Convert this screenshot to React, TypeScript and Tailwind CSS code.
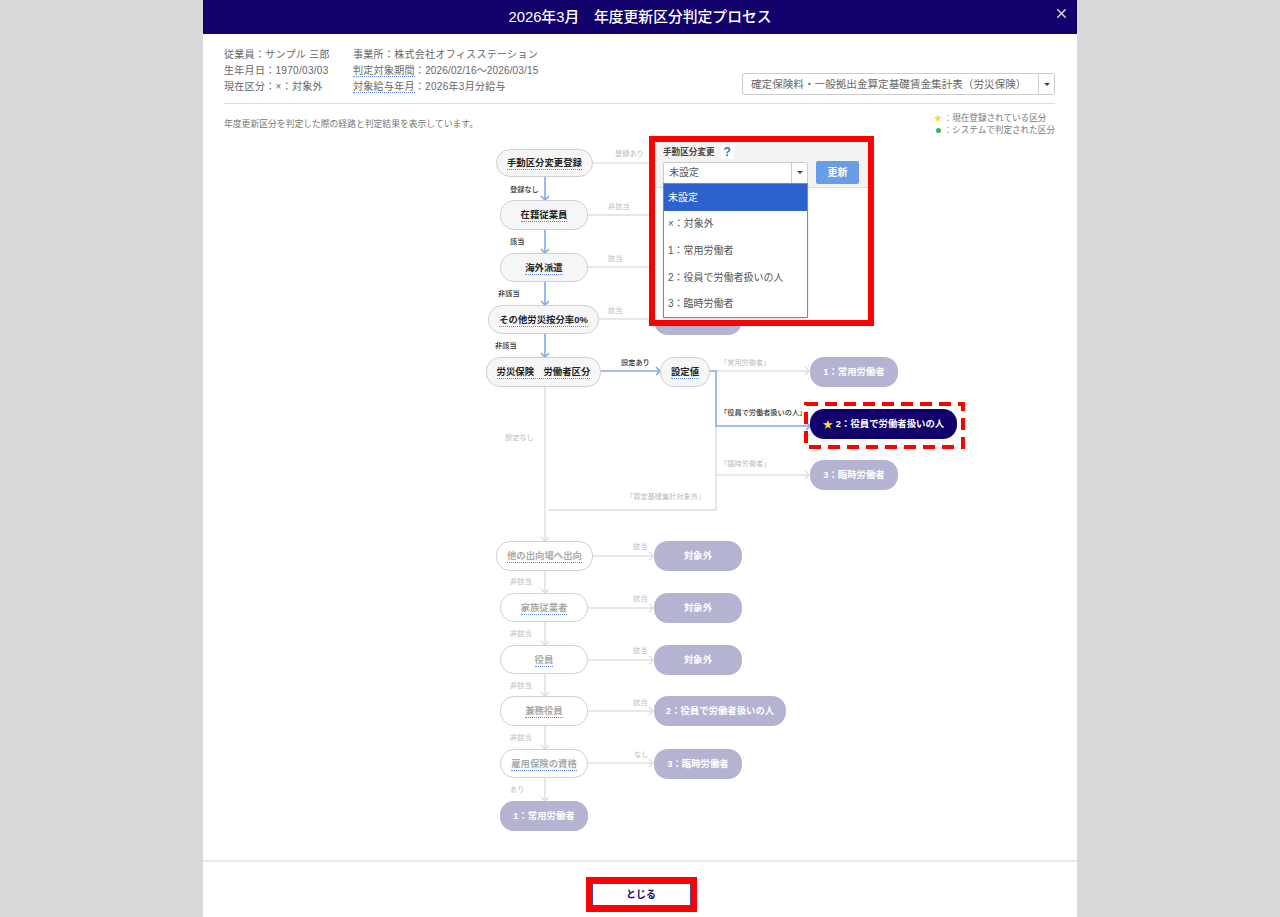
import { X } from "lucide-react";

const BLUE = "#7fa9ef";
const GREY = "#dfdfdf";

// page coordinates, the svg viewBox is shifted to match
const blueLines = [
  "M545 177V199",
  "M545 230V252",
  "M545 282V304",
  "M545 334V356",
  "M601 371H659",
  "M710 371H716V426H809",
];
const greyLines = [
  "M593 163H660",
  "M588 215H654",
  "M588 267H654",
  "M599 319H654",
  "M716 371H809",
  "M716 426V510H548",
  "M716 475H809",
  "M545 387V540",
  "M593 556H653",
  "M545 571V592",
  "M588 608H653",
  "M545 622V644",
  "M588 660H653",
  "M545 674V695",
  "M588 711H653",
  "M545 726V748",
  "M588 763H653",
  "M545 778V800",
];
const blueHeads = [
  "M541 196L545 200L549 196",
  "M541 249L545 253L549 249",
  "M541 301L545 305L549 301",
  "M541 353L545 357L549 353",
  "M656 367L660 371L656 375",
  "M806 422L810 426L806 430",
];
const greyHeads = [
  "M805 367L809 371L805 375",
  "M805 471L809 475L805 479",
  "M541 537L545 541L549 537",
  "M649 552L653 556L649 560",
  "M541 589L545 593L549 589",
  "M649 604L653 608L649 612",
  "M541 641L545 645L549 641",
  "M649 656L653 660L649 664",
  "M541 692L545 696L549 692",
  "M649 707L653 711L649 715",
  "M541 745L545 749L549 745",
  "M649 759L653 763L649 767",
  "M541 797L545 801L549 797",
];

const steps = [
  { label: "手動区分変更登録", pos: "left-[293px] top-[13px] w-[97px] h-[28px]", on: true },
  { label: "在籍従業員", pos: "left-[297px] top-[64px] w-[88px] h-[30px]", on: true },
  { label: "海外派遣", pos: "left-[297px] top-[117px] w-[88px] h-[29px]", on: true },
  { label: "その他労災按分率0%", pos: "left-[285px] top-[169px] w-[111px] h-[29px]", on: true },
  { label: "労災保険　労働者区分", pos: "left-[283px] top-[221px] w-[115px] h-[30px]", on: true },
  { label: "設定値", pos: "left-[457px] top-[221px] w-[50px] h-[30px]", on: true },
  { label: "他の出向場へ出向", pos: "left-[293px] top-[405px] w-[97px] h-[30px]", on: false },
  { label: "家族従業者", pos: "left-[297px] top-[457px] w-[88px] h-[29px]", on: false },
  { label: "役員", pos: "left-[297px] top-[509px] w-[88px] h-[29px]", on: false },
  { label: "兼務役員", pos: "left-[297px] top-[560px] w-[88px] h-[30px]", on: false },
  { label: "雇用保険の資格", pos: "left-[297px] top-[613px] w-[88px] h-[29px]", on: false },
];

const results = [
  { label: "対象外", pos: "left-[451px] top-[64px] w-[88px]" },
  { label: "対象外", pos: "left-[451px] top-[117px] w-[88px]" },
  { label: "対象外", pos: "left-[451px] top-[169px] w-[88px]" },
  { label: "1：常用労働者", pos: "left-[607px] top-[221px] w-[88px]" },
  { label: "3：臨時労働者", pos: "left-[607px] top-[324px] w-[88px]" },
  { label: "対象外", pos: "left-[451px] top-[405px] w-[88px]" },
  { label: "対象外", pos: "left-[451px] top-[457px] w-[88px]" },
  { label: "対象外", pos: "left-[451px] top-[509px] w-[88px]" },
  { label: "2：役員で労働者扱いの人", pos: "left-[451px] top-[560px] w-[132px]" },
  { label: "3：臨時労働者", pos: "left-[451px] top-[613px] w-[88px]" },
  { label: "1：常用労働者", pos: "left-[297px] top-[665px] w-[88px]" },
];

const edgeLabels = [
  { text: "登録あり", pos: "left-[412px] top-[13px]", on: false },
  { text: "登録なし", pos: "left-[307px] top-[49px]", on: true },
  { text: "非該当", pos: "left-[405px] top-[66px]", on: false },
  { text: "該当", pos: "left-[307px] top-[101px]", on: true },
  { text: "該当", pos: "left-[405px] top-[118px]", on: false },
  { text: "非該当", pos: "left-[295px] top-[153px]", on: true },
  { text: "該当", pos: "left-[405px] top-[170px]", on: false },
  { text: "非該当", pos: "left-[292px] top-[205px]", on: true },
  { text: "設定あり", pos: "left-[418px] top-[222px]", on: true },
  { text: "「常用労働者」", pos: "left-[517px] top-[222px]", on: false },
  { text: "「役員で労働者扱いの人」", pos: "left-[517px] top-[272px]", on: true },
  { text: "「臨時労働者」", pos: "left-[517px] top-[323px]", on: false },
  { text: "設定なし", pos: "left-[302px] top-[297px]", on: false },
  { text: "「算定基礎集計対象外」", pos: "left-[423px] top-[356px]", on: false },
  { text: "該当", pos: "left-[430px] top-[406px]", on: false },
  { text: "非該当", pos: "left-[307px] top-[441px]", on: false },
  { text: "該当", pos: "left-[430px] top-[458px]", on: false },
  { text: "非該当", pos: "left-[307px] top-[493px]", on: false },
  { text: "該当", pos: "left-[430px] top-[510px]", on: false },
  { text: "非該当", pos: "left-[307px] top-[545px]", on: false },
  { text: "該当", pos: "left-[430px] top-[562px]", on: false },
  { text: "非該当", pos: "left-[307px] top-[597px]", on: false },
  { text: "なし", pos: "left-[431px] top-[614px]", on: false },
  { text: "あり", pos: "left-[307px] top-[649px]", on: false },
];

const options = ["未設定", "×：対象外", "1：常用労働者", "2：役員で労働者扱いの人", "3：臨時労働者"];

function Caret() {
  return <span className="h-0 w-0 border-x-[3px] border-t-[3px] border-x-transparent border-t-[#444]" />;
}

export default function App() {
  return (
    <div className="flex min-h-[917px] justify-center bg-[#d9d9d9] [font-family:'Liberation_Sans','Noto_Sans_CJK_JP',sans-serif]">
      <div className="h-[917px] w-[874px] overflow-hidden bg-white">
        <div className="relative flex h-[34px] items-center justify-center bg-[#12006b] text-[14.8px] font-medium text-white">
          2026年3月　年度更新区分判定プロセス
          <X size={15} strokeWidth={2} className="absolute right-[8px] top-[6px] text-[#e8e8f4]" />
        </div>

        {/* employee info */}
        <div className="ml-[21px] mr-[22px] flex items-end justify-between border-b border-[#dddddd] pt-[13px] pb-[8px] text-[10px] leading-[16px] tracking-[0.3px] text-[#666666]">
          <div className="flex">
            <div className="w-[129px]">
              <div>従業員：サンプル 三郎</div>
              <div>生年月日：1970/03/03</div>
              <div>現在区分：×：対象外</div>
            </div>
            <div>
              <div>事業所：株式会社オフィスステーション</div>
              <div>
                <span className="border-b border-dotted border-[#5b8ae0]">判定対象期間</span>：
                <span className="tracking-[0.15px]">2026/02/16～2026/03/15</span>
              </div>
              <div>
                <span className="border-b border-dotted border-[#5b8ae0]">対象給与年月</span>：2026年3月分給与
              </div>
            </div>
          </div>
          <div className="flex h-[22px] w-[313px] items-center rounded-[2px] border border-[#cccccc] bg-white">
            <div className="flex-1 pl-[8px] text-[10.6px] leading-none tracking-normal">
              確定保険料・一般拠出金算定基礎賃金集計表（労災保険）
            </div>
            <div className="flex h-full w-[16px] items-center justify-center border-l border-[#cccccc]">
              <Caret />
            </div>
          </div>
        </div>

        <div className="ml-[21px] mr-[22px] flex h-[32px] justify-between text-[#777777]">
          <div className="pt-[15px] text-[8.8px] leading-[10px]">年度更新区分を判定した際の経路と判定結果を表示しています。</div>
          <div className="pt-[8px] text-[8.6px] leading-[12px]">
            <div className="flex items-center">
              <span className="w-[11px] text-center text-[9px] text-[#f6e03a]">★</span>：現在登録されている区分
            </div>
            <div className="flex items-center">
              <span className="flex w-[11px] justify-center">
                <span className="h-[5px] w-[5px] rounded-full bg-[#3fae62]" />
              </span>
              ：システムで判定された区分
            </div>
          </div>
        </div>

        {/* flow diagram */}
        <div className="relative h-[724px]">
          <svg className="absolute left-0 top-0" width="874" height="724" viewBox="203 136 874 724" fill="none">
            {greyLines.map((d) => (
              <path key={d} d={d} stroke={GREY} strokeWidth="1.5" />
            ))}
            {greyHeads.map((d) => (
              <path key={d} d={d} stroke={GREY} strokeWidth="1.5" />
            ))}
            {blueLines.map((d) => (
              <path key={d} d={d} stroke={BLUE} strokeWidth="1.6" />
            ))}
            {blueHeads.map((d) => (
              <path key={d} d={d} stroke={BLUE} strokeWidth="1.6" />
            ))}
            <rect x="806" y="404" width="157" height="43" stroke="#ff0000" strokeWidth="4" strokeDasharray="12 7" />
          </svg>

          {edgeLabels.map((l) => (
            <div
              key={l.pos}
              className={`absolute h-[10px] whitespace-nowrap text-[7.2px] leading-[10px] ${l.pos} ${l.on ? "font-medium text-[#333333]" : "text-[#bbbbbb]"}`}
            >
              {l.text}
            </div>
          ))}

          {steps.map((s) => (
            <div
              key={s.label}
              className={`absolute flex items-center justify-center rounded-[14px] border-[1.5px] border-[#d0d0d0] ${s.pos} ${s.on ? "bg-[#f6f6f6]" : "bg-white"}`}
            >
              <span
                className={`whitespace-nowrap border-b border-dotted border-[#5b8ae0] text-[9.4px] font-bold leading-[13px] ${s.on ? "text-[#222222]" : "text-[#aaaaaa]"}`}
              >
                {s.label}
              </span>
            </div>
          ))}

          {results.map((r) => (
            <div
              key={r.pos}
              className={`absolute flex h-[30px] items-center justify-center rounded-[14px] bg-[#b5b3d2] text-[9.4px] font-bold text-white ${r.pos}`}
            >
              {r.label}
            </div>
          ))}
          <div className="absolute left-[607px] top-[273px] flex h-[30px] w-[147px] items-center justify-center rounded-[14px] bg-[#12006b] text-[9.4px] font-bold text-white">
            <span className="mr-[3px] text-[10px] text-[#f6e03a]">★</span>2：役員で労働者扱いの人
          </div>

          {/* manual change panel opened over the diagram */}
          <div className="absolute left-[446px] top-0 h-[190px] w-[225px] border-[6px] border-[#ff0000] bg-white">
            <div className="h-[46px] border-b border-[#dddddd] bg-[#f3f3f3] px-[8px]">
              <div className="flex h-[19px] items-center gap-[6px] pt-[1px]">
                <span className="text-[8.6px] font-bold text-[#444444]">手動区分変更</span>
                <span className="flex h-[14px] w-[13px] items-center justify-center rounded-[2px] bg-white text-[12px] font-bold text-[#2a6fc9]">
                  ?
                </span>
              </div>
              <div className="flex items-center">
                <div className="flex h-[22px] w-[145px] items-center rounded-t-[2px] border border-[#cccccc] bg-white">
                  <span className="flex-1 pl-[5px] text-[10px] text-[#555555]">未設定</span>
                  <span className="flex h-full w-[16px] items-center justify-center border-l border-[#cccccc]">
                    <Caret />
                  </span>
                </div>
                <div className="ml-[8px] flex h-[23px] w-[43px] items-center justify-center rounded-[2px] bg-[#6a9ce8] text-[10px] font-bold text-white">
                  更新
                </div>
              </div>
            </div>
            <div className="absolute left-[8px] top-[41px] w-[145px] border border-[#888888] bg-white shadow-sm">
              {options.map((o, i) => (
                <div
                  key={o}
                  className={`flex h-[26.6px] items-center pl-[4px] text-[10px] ${i === 0 ? "bg-[#2d62cc] text-white" : "text-[#555555]"}`}
                >
                  {o}
                </div>
              ))}
            </div>
          </div>
        </div>

        <div className="flex justify-center border-t-2 border-[#e8e8e8] pl-[2px] pt-[15px]">
          <div className="border-[6px] border-[#ff0000]">
            <div className="flex h-[23px] w-[99px] items-center justify-center border border-[#4a4590] bg-white text-[10px] font-bold text-[#1a0a6e]">
              とじる
            </div>
          </div>
        </div>
      </div>
    </div>
  );
}
